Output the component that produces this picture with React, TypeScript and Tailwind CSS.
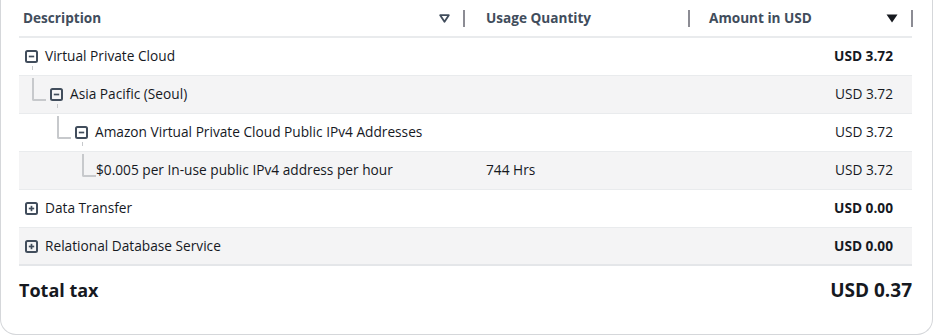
import React from "react";

const F = { fontFamily: '"Open Sans", "Noto Sans", Arial, sans-serif' };

function BoxIcon({ plus }: { plus?: boolean }) {
  return (
    <svg width="13" height="13" viewBox="0 0 13 13" className="shrink-0">
      <rect x="1" y="1" width="11" height="11" rx="1.5" fill="none" stroke="#414d5c" strokeWidth="2" />
      <line x1="3.8" y1="6.5" x2="9.2" y2="6.5" stroke="#414d5c" strokeWidth="1.7" />
      {plus && <line x1="6.5" y1="3.8" x2="6.5" y2="9.2" stroke="#414d5c" strokeWidth="1.7" />}
    </svg>
  );
}

type Row = {
  level: number;
  label: string;
  icon?: "minus" | "plus";
  usage?: string;
  amount: string;
  bold?: boolean;
  tick?: boolean;
};

const rows: Row[] = [
  { level: 0, label: "Virtual Private Cloud", icon: "minus", amount: "USD 3.72", bold: true, tick: true },
  { level: 1, label: "Asia Pacific (Seoul)", icon: "minus", amount: "USD 3.72", tick: true },
  { level: 2, label: "Amazon Virtual Private Cloud Public IPv4 Addresses", icon: "minus", amount: "USD 3.72", tick: true },
  { level: 3, label: "$0.005 per In-use public IPv4 address per hour", usage: "744 Hrs", amount: "USD 3.72" },
  { level: 0, label: "Data Transfer", icon: "plus", amount: "USD 0.00", bold: true },
  { level: 0, label: "Relational Database Service", icon: "plus", amount: "USD 0.00", bold: true },
];

function Sep() {
  return <div className="w-[2px] h-[17px] bg-[#8c8c94]" />;
}

export default function App() {
  return (
    <div className="w-[936px] h-[336px] bg-white overflow-hidden" style={F}>
      <div className="w-[933px] h-[335px] border-x border-b border-[#d5d7da] rounded-b-[16px] pl-[18px] pr-[20px]">
        {/* header */}
        <div className="grid grid-cols-[446px_225px_223px] h-[38px] border-b-2 border-[#e9ebed] text-[13.6px] font-bold text-[#414d5c]">
          <div className="flex items-center pl-[4px]">
            <span className="flex-1">Description</span>
            <svg width="11" height="9" viewBox="0 0 11 9" className="mr-[13px]">
              <path d="M1.2 1.2 H9.8 L5.5 7.8 Z" fill="none" stroke="#414d5c" strokeWidth="1.8" strokeLinejoin="round" />
            </svg>
            <Sep />
          </div>
          <div className="flex items-center pl-[21px]">
            <span className="flex-1">Usage Quantity</span>
            <Sep />
          </div>
          <div className="flex items-center pl-[19px]">
            <span className="flex-1">Amount in USD</span>
            <svg width="12" height="9" viewBox="0 0 12 9" className="mr-[13px]">
              <path d="M0.5 0.5 H11.5 L6 8.5 Z" fill="#16191f" />
            </svg>
            <Sep />
          </div>
        </div>
        {/* rows */}
        {rows.map((r, i) => (
          <div
            key={i}
            className={`grid grid-cols-[446px_225px_223px] h-[38px] text-[13.7px] text-[#16191f] ${
              i % 2 === 1 ? "bg-[#f4f4f5]" : "bg-white"
            } ${i === rows.length - 1 ? "border-b-2 border-[#e4e6e9]" : "border-b border-[#e9ebed]"}`}
          >
            <div className="relative flex items-center" style={{ paddingLeft: 6 + r.level * 25 }}>
              {r.level > 0 && (
                <div
                  className="absolute border-l-2 border-b-2 border-[#c7c9cc] rounded-bl-[2px]"
                  style={{
                    left: 13 + (r.level - 1) * 25,
                    top: 2,
                    height: 23,
                    width: r.icon ? 14 : 14,
                  }}
                />
              )}
              {r.icon ? <BoxIcon plus={r.icon === "plus"} /> : null}
              {r.tick && (
                <div
                  className="absolute w-[1px] h-[4px] bg-[#c7c9cc]"
                  style={{ left: 13 + r.level * 25, top: 28 }}
                />
              )}
              <span className={r.icon ? "ml-[7px]" : "ml-[-4px]"}>{r.label}</span>
            </div>
            <div className="flex items-center pl-[21px]">{r.usage}</div>
            <div className={`flex items-center justify-end pr-[20px] ${r.bold ? "font-bold" : ""}`}>{r.amount}</div>
          </div>
        ))}
        {/* total */}
        <div className="flex items-center justify-between h-[48px] text-[#16191f] font-bold">
          <span className="text-[18px]">Total tax</span>
          <span className="text-[19px]">USD 0.37</span>
        </div>
      </div>
    </div>
  );
}
